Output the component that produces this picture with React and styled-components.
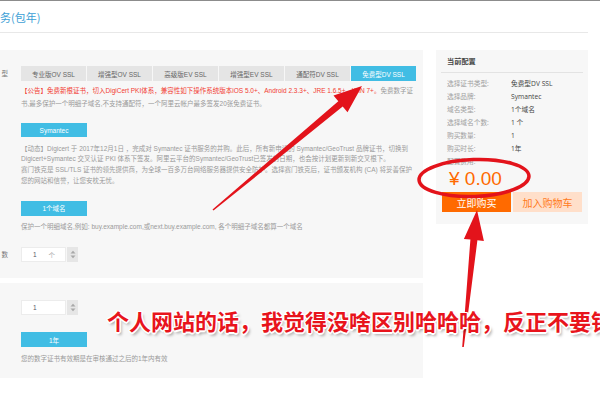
import React from 'react';
import styled, { createGlobalStyle } from 'styled-components';

const GlobalStyle = createGlobalStyle`
  html, body {
    margin: 0;
    padding: 0;
    background: #fff;
    overflow: hidden;
  }
  body {
    width: 600px;
    height: 400px;
    font-family: 'Liberation Sans', 'Noto Sans CJK SC', sans-serif;
  }
`;

const StScreen = styled.div`
  position: relative;
  width: 600px;
  height: 400px;
  overflow: hidden;
  border-top: 1px solid #8c8c8c;
  box-sizing: border-box;
`;

const StPage = styled.div`
  width: 588px;
`;

const StHeader = styled.div`
  height: 31px;
  border-bottom: 1px solid #e8e8e8;
  display: flex;
  align-items: center;
  font-size: 11px;
  color: #3d9fd6;
  font-family: 'Noto Sans CJK SC', sans-serif;
`;

const StBody = styled.div`
  display: flex;
  align-items: flex-start;
  gap: 13px;
  margin-top: 17px;
`;

const StLeftCol = styled.div`
  width: 423px;
  display: flex;
  flex-direction: column;
  gap: 5px;
`;

const StPanel = styled.div`
  background: #f7f7f7;
  padding: ${({ pad }) => pad};
`;

const StRow = styled.div`
  display: grid;
  grid-template-columns: 8px 1fr;
  column-gap: 13px;
`;

const StLabel = styled.div`
  text-align: right;
  font-size: 6.5px;
  line-height: 15px;
  color: #777;
  white-space: nowrap;
  font-family: 'Noto Sans CJK SC', sans-serif;
`;

const StField = styled.div`
  display: flex;
  flex-direction: column;
  align-items: flex-start;
`;

const StTabs = styled.div`
  display: flex;
  gap: 1px;
`;

const StTab = styled.div`
  width: 65px;
  height: 15px;
  display: flex;
  align-items: center;
  justify-content: center;
  font-size: 6.5px;
  white-space: nowrap;
  background: ${({ active }) => (active ? '#41bde4' : '#e5e5e5')};
  color: ${({ active }) => (active ? '#fff' : '#666')};
`;

const StText = styled.p`
  margin: ${({ mt }) => mt} 0 0 0;
  font-size: 6.5px;
  line-height: ${({ lh }) => lh || '11px'};
  color: #9a9a9a;
  white-space: nowrap;
`;

const StRed = styled.span`
  color: #f23c32;
`;

const StBlueButton = styled.div`
  margin-top: ${({ mt }) => mt};
  width: 66px;
  height: ${({ h }) => h || '15px'};
  background: #41bde4;
  color: #fff;
  font-size: 6.5px;
  display: flex;
  align-items: center;
  justify-content: center;
`;

const StNumberBox = styled.div`
  display: flex;
  gap: 1px;
  height: 15px;
`;

const StNumberInput = styled.div`
  width: 45px;
  background: #fff;
  box-sizing: border-box;
  border: 1px solid #ececec;
  display: flex;
  align-items: center;
  justify-content: space-between;
  padding: 0 10px 0 11px;
  font-size: 6.5px;
  color: #556;
`;

const StUnit = styled.span`
  color: #aaa;
`;

const StSpinner = styled.div`
  width: 11px;
  background: #e6e6e6;
  display: flex;
  align-items: center;
  justify-content: center;
`;

const StSide = styled.div`
  width: 152px;
  background: #f7f7f7;
  padding: 0 5px 12px;
  box-sizing: border-box;
  font-family: 'Open Sans', 'Noto Sans CJK SC', sans-serif;
`;

const StSideTitle = styled.div`
  height: 22px;
  line-height: 22px;
  border-bottom: 1px solid #e3e3e3;
  padding-left: 6px;
  font-size: 7.2px;
  color: #444;
  font-weight: 600;
`;

const StSummary = styled.div`
  display: grid;
  grid-template-columns: 64px 1fr;
  margin-top: 4px;
  padding-left: 6px;
  font-size: 6.7px;
  line-height: 13px;
`;

const StSumLabel = styled.div`
  color: #a0a0a0;
`;

const StSumValue = styled.div`
  color: #444;
`;

const StPrice = styled.div`
  padding-left: 8px;
  font-size: 19px;
  line-height: 22px;
  color: #ff6a00;
  font-family: 'Liberation Sans', 'Noto Sans CJK SC', sans-serif;
`;

const StActions = styled.div`
  display: flex;
  gap: 2px;
  margin-top: 2px;
  padding-left: 1px;
`;

const StActionButton = styled.div`
  width: 69px;
  height: 20px;
  display: flex;
  align-items: center;
  justify-content: center;
  font-size: 10px;
  font-family: 'Noto Sans CJK SC', sans-serif;
  background: ${({ primary }) => (primary ? '#ff6a00' : '#ffdfca')};
  color: ${({ primary }) => (primary ? '#fff' : '#ff7a20')};
`;

const StMarks = styled.svg`
  position: absolute;
  left: 0;
  top: -1px;
  pointer-events: none;
`;

const StComment = styled.div`
  position: absolute;
  left: 107px;
  top: 307px;
  font-size: 22px;
  line-height: 24px;
  font-weight: 700;
  white-space: nowrap;
  color: #e8141c;
  font-family: 'Noto Sans CJK SC', sans-serif;
  text-shadow:
    1.5px 0 0 #fff, -1.5px 0 0 #fff, 0 1.5px 0 #fff, 0 -1.5px 0 #fff,
    1px 1px 0 #fff, -1px -1px 0 #fff, 1px -1px 0 #fff, -1px 1px 0 #fff,
    2px 3px 3px rgba(0, 0, 0, 0.35);
`;

const tabs = ['专业版OV SSL', '增强型OV SSL', '高级版EV SSL', '增强型EV SSL', '通配符DV SSL', '免费型DV SSL'];

const summary = [
  ['选择证书类型:', '免费型DV SSL'],
  ['选择品牌:', 'Symantec'],
  ['域名类型:', '1个域名'],
  ['选择域名个数:', '1 个'],
  ['购买数量:', '1'],
  ['购买时长:', '1年'],
  ['配置费用:', ''],
];

const Spinner = () => (
  <StSpinner>
    <svg width="6" height="9" viewBox="0 0 6 9">
      <path d="M0.5 3.5 L3 0.8 L5.5 3.5 Z" fill="#a8a8a8" />
      <path d="M0.5 5.5 L3 8.2 L5.5 5.5 Z" fill="#a8a8a8" />
    </svg>
  </StSpinner>
);

const App = () => {
  return (
    <StScreen>
      <GlobalStyle />
      <StPage>
        <StHeader>务(包年)</StHeader>
        <StBody>
          <StLeftCol>
            <StPanel pad="16px 0 16px">
              <StRow>
                <StLabel>型</StLabel>
                <StField>
                  <StTabs>
                    {tabs.map((t, i) => (
                      <StTab key={t} active={i === tabs.length - 1}>
                        {t}
                      </StTab>
                    ))}
                  </StTabs>
                  <StText mt="2.5px" lh="13px">
                    <StRed>
                      【公告】免费新根证书，切入DigiCert PKI体系，兼容性如下操作系统版本iOS 5.0+、Android 2.3.3+、JRE 1.6.5+、WIN 7+。
                    </StRed>
                    免费数字证
                    <br />
                    书,最多保护一个明细子域名,不支持通配符，一个阿里云帐户最多签发20张免费证书。
                  </StText>
                  <StBlueButton mt="13.5px" h="14px">Symantec</StBlueButton>
                  <StText mt="6.5px" lh="10.7px">
                    【动态】Digicert 于 2017年12月1日 ，完成对 Symantec 证书服务的并购。此后，所有新申请的 Symantec/GeoTrust 品牌证书，切换到
                    <br />
                    Digicert+Symantec 交叉认证 PKI 体系下签发。阿里云平台的Symantec/GeoTrust已签发的日期，也会按计划更新到新交叉根下。
                    <br />
                    赛门铁克是 SSL/TLS 证书的领先提供商，为全球一百多万台网络服务器提供安全防护。选择赛门铁克后，证书颁发机构 (CA) 将妥善保护
                    <br />
                    您的网站和信誉，让您安枕无忧。
                  </StText>
                  <StBlueButton mt="14.5px">1个域名</StBlueButton>
                  <StText mt="5.5px">
                    保护一个明细域名,例如: buy.example.com,或next.buy.example.com, 各个明细子域名都算一个域名
                  </StText>
                </StField>
              </StRow>
              <StRow style={{ marginTop: '15px' }}>
                <StLabel>数</StLabel>
                <StField>
                  <StNumberBox>
                    <StNumberInput>
                      1<StUnit>个</StUnit>
                    </StNumberInput>
                    <Spinner />
                  </StNumberBox>
                </StField>
              </StRow>
            </StPanel>
            <StPanel pad="17px 0 14.5px">
              <StRow>
                <StLabel />
                <StField>
                  <StNumberBox>
                    <StNumberInput>1</StNumberInput>
                    <Spinner />
                  </StNumberBox>
                  <StBlueButton mt="17px">1年</StBlueButton>
                  <StText mt="5.5px">您的数字证书有效期是在审核通过之后的1年内有效</StText>
                </StField>
              </StRow>
            </StPanel>
          </StLeftCol>
          <StSide>
            <StSideTitle>当前配置</StSideTitle>
            <StSummary>
              {summary.map(([k, v]) => (
                <React.Fragment key={k}>
                  <StSumLabel>{k}</StSumLabel>
                  <StSumValue>{v}</StSumValue>
                </React.Fragment>
              ))}
            </StSummary>
            <StPrice>¥ 0.00</StPrice>
            <StActions>
              <StActionButton primary>立即购买</StActionButton>
              <StActionButton>加入购物车</StActionButton>
            </StActions>
          </StSide>
        </StBody>
      </StPage>

      <StMarks width="600" height="400" viewBox="0 0 600 400">
        <ellipse cx="474" cy="178" rx="55" ry="18.5" fill="none" stroke="#e3131b" strokeWidth="3.5" transform="rotate(-2 474 178)" />
        <polygon
          points="212.5,209.4 338.3,101.2 333.5,95.5 362,86 347.5,112.3 342.7,106.6 213.5,210.6"
          fill="#e3131b"
        />
        <polygon
          points="462.2,346.9 470.4,239.5 463.9,238.9 477,210 483.9,240.9 477.4,240.3 463.8,347.1"
          fill="#e3131b"
        />
      </StMarks>
      <StComment>个人网站的话，我觉得没啥区别哈哈哈，反正不要钱</StComment>
    </StScreen>
  );
};

export default App;
